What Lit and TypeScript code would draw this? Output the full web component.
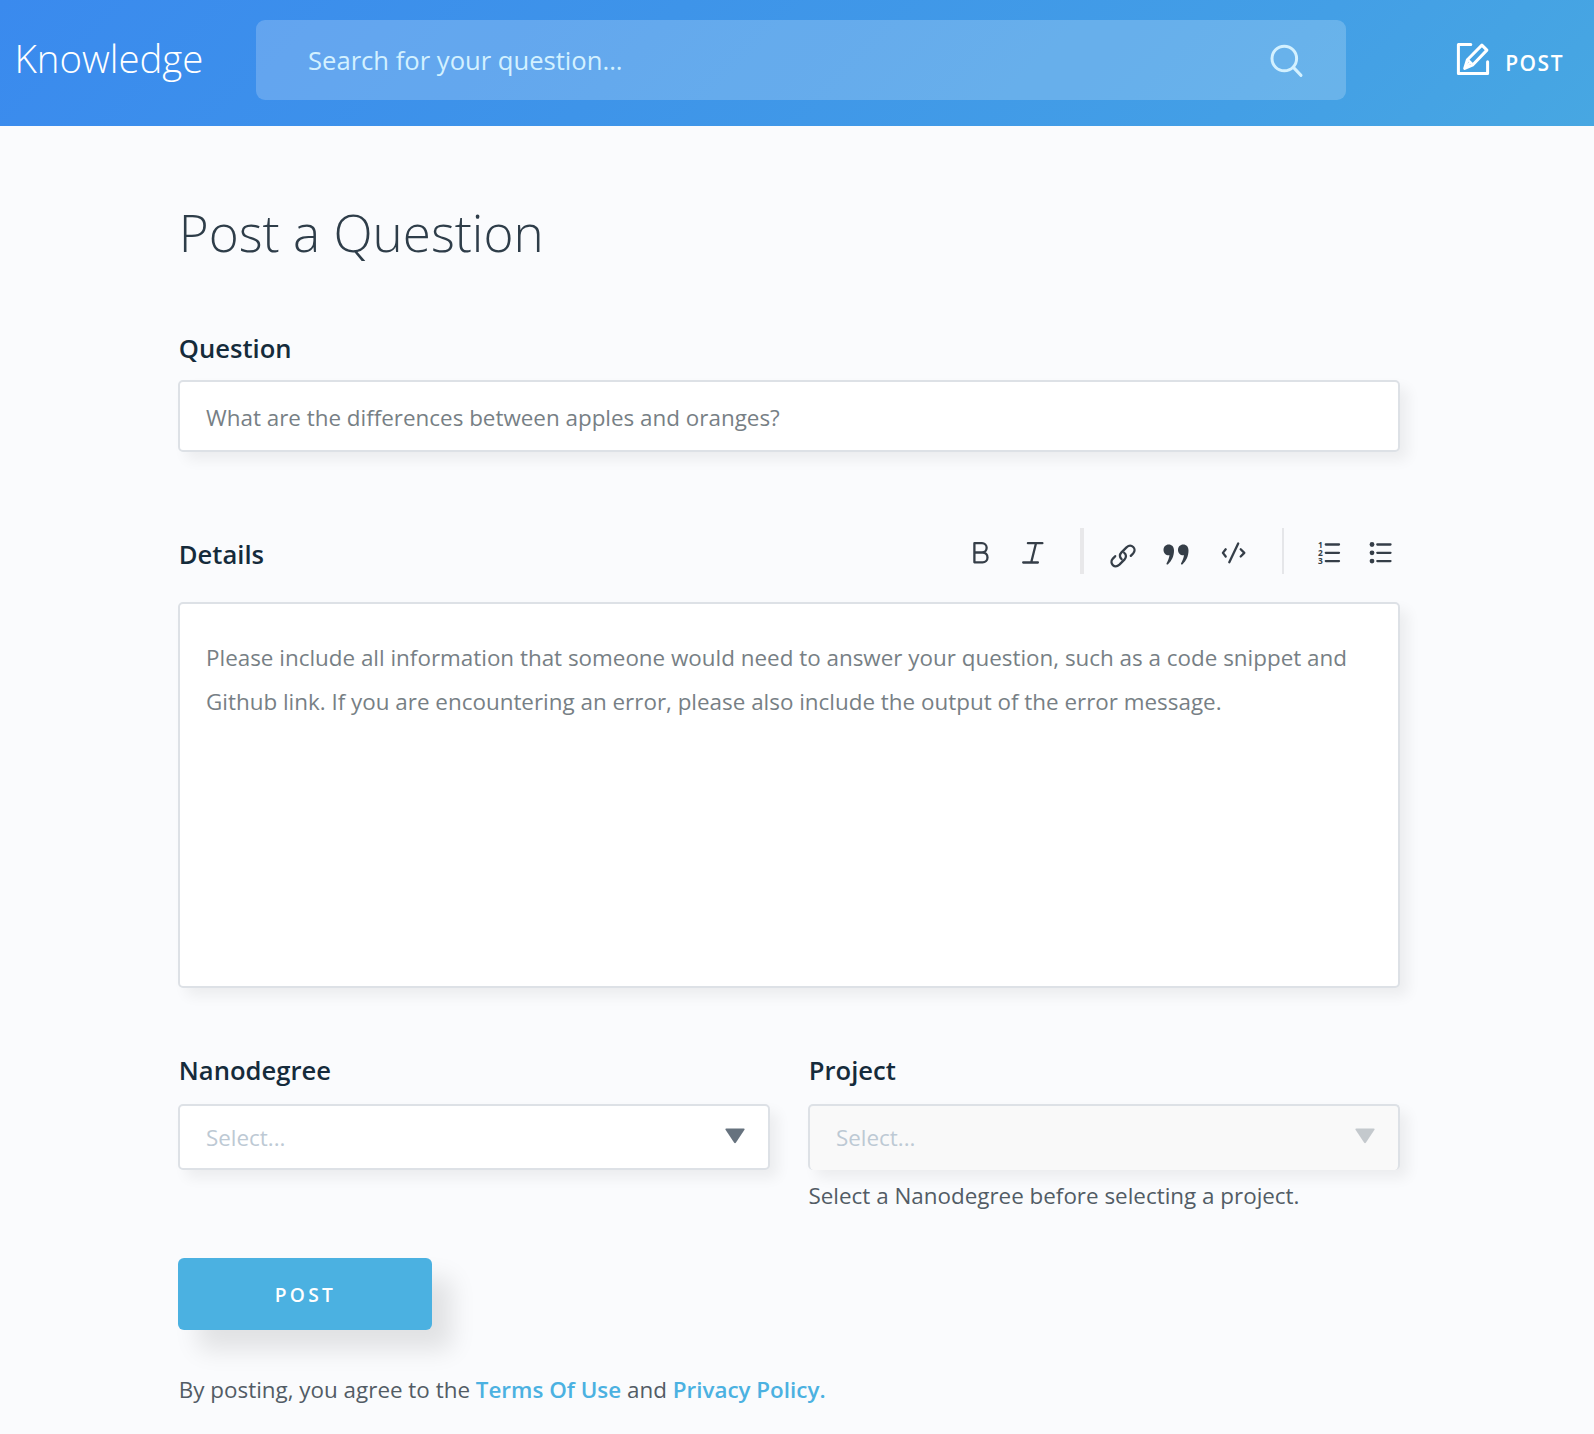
import { LitElement, html, css, svg } from 'lit';
import { customElement, property } from 'lit/decorators.js';

const searchIcon = html`<svg class="search-icon" viewBox="0 0 34 34" width="34" height="34" fill="none" stroke="#d3f1ff" stroke-width="3" stroke-linecap="round">
  <circle cx="14.3" cy="14.5" r="12.3"/><path d="M23.4 23.4 31 31.4"/></svg>`;

const composeIcon = html`<svg viewBox="0 0 34 34" width="34" height="34" fill="none" stroke="#fff" stroke-width="3" stroke-linecap="round" stroke-linejoin="round">
  <path d="M14.8 2.4H2.4v29.2h29.2V19.8"/>
  <path d="M8.7 26.4 11.4 17.7 25.9 3.1 30.9 8.1 16.9 22.8Z"/>
  <path stroke-width="2.4" d="M12 17.8 16.6 22.3M9.8 25.3 14 20.5"/></svg>`;

const glyphs = {
  bold: svg`<path d="M5.4 5.2V24.3H13.6a4.9 4.9 0 0 0 0-9.8H5.4M13 14.5a4.6 4.6 0 0 0 0-9.3H5.4"/>`,
  italic: svg`<path d="M9.9 5.2H24.4M5.2 24.5H19.9M18 5.2 13.2 24.5"/>`,
  link: svg`<path d="M13.6 20.2c-2.2-1.9-2.2-4.7-.1-6.8l5-5c4.9-4.4 10.8 1.4 6.6 6.1l-2.3 2.4"/><path d="M16.2 13.8c2.3 1.8 2.3 4.6.2 6.8l-5 5C6.6 30.1.8 24.3 4.9 19.6l2.3-2.4"/>`,
  quote: svg`<path class="solid" d="M8.7 6.5c3.2 0 5.3 2.3 5.3 6 0 5.6-2.3 10.3-5.9 13.7-.8.7-2 .1-1.500-1 1.500-2.700 2.500-5.300 2.900-8-3.300.5-6-2-6-5.300 0-3 2.200-5.400 5.200-5.400Z"/><path class="solid" d="M23.200 6.500c3.200 0 5.300 2.300 5.300 6 0 5.600-2.300 10.300-5.900 13.700-.8.7-2 .1-1.500-1 1.500-2.700 2.500-5.300 2.900-8-3.300.5-6-2-6-5.300 0-3 2.200-5.400 5.200-5.400Z"/>`,
  code: svg`<path d="M20.2 5.5 11.3 24.3M7.7 11.3 4.9 14.9 7.7 18.5M22.7 11.3 26.3 14.9 22.7 18.5"/>`,
  ordered: svg`<path d="M12.8 6.5H26M12.8 14.8H26M12.8 23.1H26"/><text x="5" y="9.6">1</text><text x="5" y="17.9">2</text><text x="5" y="26.2">3</text>`,
  bulleted: svg`<path d="M13.3 6.5H26.5M13.3 14.8H26.5M13.3 23.1H26.5"/><circle class="solid" cx="8" cy="6.5" r="2.4"/><circle class="solid" cx="8" cy="14.8" r="2.4"/><circle class="solid" cx="8" cy="23.1" r="2.4"/>`,
};

type Tool = keyof typeof glyphs;

@customElement('format-toolbar')
class FormatToolbar extends LitElement {
  static styles = css`
    :host { display: flex; align-items: center; height: 46px; padding-right: 4px; color: #353e48; }
    .tool { width: 32px; height: 32px; flex: none; margin-top: 6px; border: 0; padding: 0; background: none; color: inherit; }
    .bold { margin-right: 17px; }
    .italic { margin-right: 30px; }
    .link { margin: 8px 20px 0 24px; }
    .quote { margin-right: 26px; }
    .code { margin-right: 32px; }
    .ordered { margin-left: 29px; margin-right: 19px; }
    .rule { width: 4px; height: 46px; flex: none; background: #e8e8ea; }
    .thin { width: 2px; background: #e5e6e9; }
    svg { display: block; fill: none; stroke: currentColor; stroke-width: 2.3; stroke-linecap: round; stroke-linejoin: round; overflow: visible; }
    .solid { fill: currentColor; stroke: none; }
    text { fill: currentColor; stroke: none; font: 700 8.4px "Open Sans", sans-serif; }
  `;
  private tool(name: Tool) {
    return html`<button class="tool ${name}" aria-label=${name}><svg viewBox="0 0 32 32" width="32" height="32">${glyphs[name]}</svg></button>`;
  }
  render() {
    return html`${this.tool('bold')}${this.tool('italic')}<span class="rule"></span>
      ${this.tool('link')}${this.tool('quote')}${this.tool('code')}<span class="rule thin"></span>
      ${this.tool('ordered')}${this.tool('bulleted')}`;
  }
}

@customElement('select-field')
class SelectField extends LitElement {
  @property() label = '';
  @property() hint = '';
  @property({ type: Boolean, reflect: true }) disabled = false;
  static styles = css`
    :host { display: block; }
    .label { padding-left: .8px; font-weight: 600; font-size: 25.6px; line-height: 36px; color: #152b3b; }
    .box { display: flex; align-items: center; justify-content: space-between; box-sizing: border-box; height: 66px; margin-top: 15px; padding: 0 23px 0 26px; border: 2px solid #dde1e6; border-radius: 5px; background: #fff; color: #bdc9d4; box-shadow: 8px 8px 14px rgba(0, 0, 0, .06); font-size: 22.4px; }
    .arrow { width: 20px; height: 16px; margin-top: -3px; fill: #66727e; }
    .hint { margin-top: 9px; padding-left: .5px; line-height: 34px; color: #525c65; }
    :host([disabled]) .box { background: #f9f9f9; border-bottom-width: 0; padding-bottom: 2px; }
    :host([disabled]) .arrow { fill: #c4c9cd; }
  `;
  render() {
    return html`<div class="label">${this.label}</div>
      <div class="box"><span>Select...</span><svg class="arrow" viewBox="0 0 20 16"><path d="M1.3.5H18.7Q20.2.5 19.3 2L11 14.6Q10 16 9 14.6L.7 2Q-.2.5 1.3.5Z"/></svg></div>
      ${this.hint ? html`<div class="hint">${this.hint}</div>` : null}`;
  }
}

@customElement('app-root')
class AppRoot extends LitElement {
  static styles = css`
    :host { display: block; box-sizing: border-box; min-height: 1434px; background: #fafbfd; font-family: "Open Sans", sans-serif; font-size: 22.41px; color: #525c65; }
    .header { display: flex; align-items: center; height: 126px; box-sizing: border-box; padding: 0 30px 6px 14.5px; background: linear-gradient(135deg, #3a8aee 0%, #3e94e9 40%, #439fe6 78%, #47a7e2 100%); color: #fff; }
    .brand { width: 241.5px; font-weight: 300; font-size: 38.4px; line-height: 54px; margin-top: -4px; }
    .search { display: flex; align-items: center; justify-content: space-between; box-sizing: border-box; width: 1090px; height: 80px; padding: 0 42px 0 52px; border-radius: 9px; background: rgba(255, 255, 255, .2); color: #d3f1ff; font-size: 25.6px; }
    .search-icon { margin-top: 2px; }
    .compose { display: flex; align-items: center; gap: 15px; margin-left: auto; font-weight: 600; font-size: 21px; letter-spacing: 1.5px; }
    .compose svg { margin-top: -3px; }
    .compose span { margin-top: 5px; }
    .content { width: 1222px; padding: 72px 0 0 178px; }
    .title { margin: 0; padding-left: .8px; font-weight: 300; font-size: 51.2px; line-height: 68px; color: #2e3d49; }
    .label { padding-left: .8px; font-weight: 600; font-size: 25.6px; line-height: 36px; color: #152b3b; }
    .question { margin-top: 65px; }
    .field { box-sizing: border-box; border: 2px solid #dde1e6; border-radius: 5px; background: #fff; color: #777f85; box-shadow: 8px 8px 14px rgba(0, 0, 0, .06); }
    .line { height: 72px; margin-top: 13px; padding: 2px 26px 0; line-height: 68px; }
    .details { display: flex; justify-content: space-between; margin-top: 76px; }
    .details .label { margin-top: 9px; }
    .area { height: 386px; margin-top: 28px; padding: 32px 26px; line-height: 44px; }
    .selects { display: grid; grid-template-columns: 592px 592px; gap: 38px; margin-top: 65px; }
    .submit { display: block; width: 254px; height: 72px; margin-top: 45px; padding: 0 0 0 1px; border: 0; border-radius: 6px; background: #4bb1e1; color: #fff; font: 600 19.2px "Open Sans", sans-serif; letter-spacing: 3.3px; box-shadow: 20px 20px 24px rgba(0, 0, 0, .1); }
    .terms { margin-top: 43px; padding-left: .8px; line-height: 34px; }
    .terms a { color: #4bb1e1; font-weight: 600; }
  `;
  render() {
    return html`
      <header class="header">
        <div class="brand">Knowledge</div>
        <div class="search"><span>Search for your question...</span>${searchIcon}</div>
        <div class="compose">${composeIcon}<span>POST</span></div>
      </header>
      <main class="content">
        <h1 class="title">Post a Question</h1>
        <div class="label question">Question</div>
        <div class="field line">What are the differences between apples and oranges?</div>
        <div class="details"><div class="label">Details</div><format-toolbar></format-toolbar></div>
        <div class="field area">Please include all information that someone would need to answer your question, such as a code snippet and Github link. If you are encountering an error, please also include the output of the error message.</div>
        <div class="selects">
          <select-field label="Nanodegree"></select-field>
          <select-field label="Project" hint="Select a Nanodegree before selecting a project." disabled></select-field>
        </div>
        <button class="submit">POST</button>
        <div class="terms">By posting, you agree to the <a>Terms Of Use</a> and <a>Privacy Policy.</a></div>
      </main>`;
  }
}
